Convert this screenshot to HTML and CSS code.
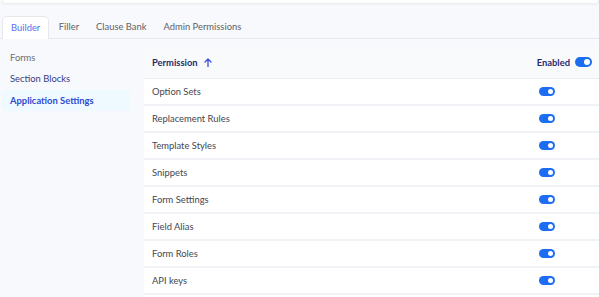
FILE: index.html
```html
<html>
<head>
<meta charset="utf-8">
<title>Permissions</title>
<link rel="stylesheet" href="styles.css">
</head>
<body>

<!-- bandeau du haut -->
<div class="topcard"></div>

<!-- onglets -->
<div class="tabs">
	<div class="tab active">Builder</div>
	<div class="tab">Filler</div>
	<div class="tab">Clause Bank</div>
	<div class="tab">Admin Permissions</div>
</div>

<div class="main">

	<!-- menu de gauche -->
	<div class="side">
		<div class="item">Forms</div>
		<div class="item navy">Section Blocks</div>
		<div class="item current">Application Settings</div>
	</div>

	<!-- tableau des permissions -->
	<div class="grid">
		<div class="head">
			<div class="title">Permission
				<svg class="arrow" width="8" height="9" viewBox="0 0 8 9"><path d="M4 8.5V1M1 4l3-3 3 3" fill="none" stroke="#3d4fd8" stroke-width="1.3" stroke-linecap="round" stroke-linejoin="round"/></svg>
			</div>
			<div class="enabled">Enabled <span class="toggle big"></span></div>
		</div>
		<div class="row"><span>Option Sets</span><span class="toggle"></span></div>
		<div class="row"><span>Replacement Rules</span><span class="toggle"></span></div>
		<div class="row"><span>Template Styles</span><span class="toggle"></span></div>
		<div class="row"><span>Snippets</span><span class="toggle"></span></div>
		<div class="row"><span>Form Settings</span><span class="toggle"></span></div>
		<div class="row"><span>Field Alias</span><span class="toggle"></span></div>
		<div class="row"><span>Form Roles</span><span class="toggle"></span></div>
		<div class="row"><span>API keys</span><span class="toggle"></span></div>
	</div>

</div>

</body>
</html>
```

FILE: styles.css
```css
body {margin:0; background:#f8f9fc; font-family:Lato, "Open Sans", sans-serif; font-size:9.4px; color:#44474f; overflow:hidden; height:297px;}

.topcard {height:3px; margin:0 0 0 2px; background:#fff; border:1px solid #eceef2; border-top:0;
	border-radius:0 0 6px 6px; box-shadow:0 1px 2px rgba(0,0,0,0.04);}

.tabs {display:flex; margin-top:12px; padding-left:2px; border-bottom:1px solid #e6e8ee; height:22px;}
.tab {padding:0 8.5px; line-height:22px; color:#5f6269;}
.tab.active {background:#fff; color:#5570ee; border:1px solid #e6e8ee; border-bottom:0;
	border-radius:5px 5px 0 0; padding:0 8px; height:22px; line-height:21px; margin-right:1px;}

.main {display:flex; padding-left:2px; margin-top:7px;}

.side {width:128px; padding-top:1px;}
.item {height:21px; line-height:21px; padding-left:8px; color:#6b6e75;}
.item.navy {color:#363c86; height:22px; line-height:22px;}
.item.current {background:#eefaff; color:#2f4ad2; font-weight:700; border-radius:4px;}

.grid {flex:1; margin-left:14px; background:#fff; height:251px;}
.head {display:flex; justify-content:space-between; align-items:center; height:32px;
	background:#f9fafb; border-bottom:1px solid #eceef1; padding:0 7px 0 8px;}
.title {color:#262b6b; font-weight:700; display:flex; align-items:center; gap:6px;}
.enabled {color:#262b6b; font-weight:700; display:flex; align-items:center; gap:5px;}

.row {display:flex; align-items:center; height:25px; border-bottom:2px solid #f1f2f5; padding:0 44px 0 8px;
	justify-content:space-between;}

.toggle {display:inline-block; position:relative; width:16px; height:9px; border-radius:5px; background:#1d6df3;}
.toggle:after {content:""; position:absolute; right:2px; top:2px; width:5px; height:5px; border-radius:50%; background:#fff;}
.toggle.big {width:17px; height:10px;}
.toggle.big:after {width:6px; height:6px;}
```
